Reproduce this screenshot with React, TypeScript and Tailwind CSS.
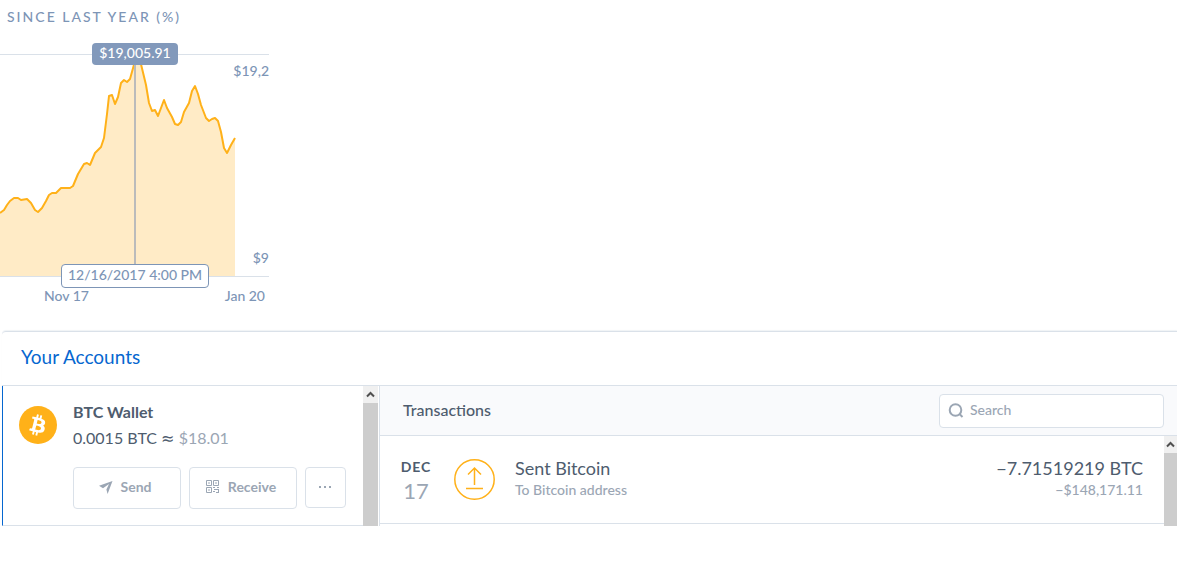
import type { ReactNode } from "react";
import clsx from "clsx";

// Price points in chart coordinates, origin at the top left of the plot
const PRICE_POINTS: [number, number][] = [
  [0, 158], [4, 155], [7, 150], [10, 146], [14, 143], [18, 143], [21, 145],
  [27, 144], [31, 148], [35, 155], [38, 157], [42, 153], [46, 146], [49, 140],
  [52, 138], [56, 138], [61, 133], [70, 133], [73, 131], [78, 119], [84, 109],
  [87, 108], [90, 110], [95, 98], [101, 92], [104, 83], [107, 59], [109, 41],
  [112, 40], [115, 49], [118, 42], [121, 28], [124, 25], [127, 27], [130, 24],
  [135, 6], [140, 5], [146, 30], [149, 48], [152, 56], [155, 55], [158, 61],
  [161, 53], [164, 45], [167, 53], [172, 62], [175, 69], [178, 70], [181, 67],
  [184, 57], [189, 48], [192, 36], [195, 31], [198, 39], [201, 50], [206, 63],
  [209, 66], [212, 64], [215, 63], [218, 66], [221, 77], [224, 93], [227, 98],
  [231, 90], [235, 83],
];

const LINE = PRICE_POINTS.map(([x, y]) => `${x},${y}`).join(" ");

function PriceChart() {
  return (
    <section className="w-[269px] text-sm font-medium text-[#7d95b6]">
      <h2 className="flex h-[53px] items-start pl-[7px] pt-2 text-sm leading-[18px] tracking-[2px]">
        SINCE LAST YEAR (%)
      </h2>
      <div className="relative mt-px h-[223px] border-y border-[#dae1e9]">
        <svg
          viewBox="0 0 269 221"
          className="block h-full w-full"
          role="img"
          aria-label="Bitcoin price"
        >
          <polygon points={`0,221 ${LINE} 235,221`} fill="#ffebc6" />
          <polyline
            points={LINE}
            fill="none"
            stroke="#ffb119"
            strokeWidth="2"
            strokeLinejoin="round"
          />
          <path d="M135 0V221" stroke="#bbbbbb" strokeWidth="2" />
        </svg>
        <span className="absolute right-0 top-[7px] leading-[18px]">$19,2</span>
        <span className="absolute bottom-[9px] right-0 leading-[18px]">$9</span>
        {/* Hover markers */}
        <span className="absolute -top-3 left-[135px] flex h-[22px] w-[86px] -translate-x-1/2 items-center justify-center rounded bg-[#8299bb] pb-0.5 text-white">
          $19,005.91
        </span>
        <span className="absolute bottom-0 left-[135px] flex h-6 w-[148px] -translate-x-1/2 translate-y-1/2 items-center justify-center whitespace-nowrap rounded border border-[#7d95b6] bg-white pb-0.5">
          12/16/2017 4:00 PM
        </span>
      </div>
      <div className="flex justify-between pl-11 pr-1 pt-2.5 leading-[18px]">
        <span>Nov 17</span>
        <span>Jan 20</span>
      </div>
    </section>
  );
}

function ScrollBar({ className }: { className?: string }) {
  return (
    <div className={clsx("shrink-0 bg-[#cdcdcd]", className)} aria-hidden="true">
      <div className="flex h-[17px] items-center justify-center bg-[#f0f0f0]">
        <svg width="9" height="7" viewBox="0 0 9 7">
          <path
            d="M1 5.5 4.5 2 8 5.5"
            fill="none"
            stroke="#505050"
            strokeWidth="2"
          />
        </svg>
      </div>
    </div>
  );
}

function BitcoinLogo() {
  return (
    <svg viewBox="0 0 32 32" className="size-[38px] shrink-0" aria-hidden="true">
      <circle cx="16" cy="16" r="16" fill="#ffb119" />
      <path
        fill="#fff"
        transform="translate(16 16) scale(0.9) translate(-16.5 -16)"
        d="M23.19 14.02c.31-2.1-1.28-3.23-3.47-3.98l.71-2.84-1.73-.43-.69 2.77-1.39-.33.7-2.79-1.73-.43-.71 2.84-1.1-.26-2.4-.6-.46 1.85s1.29.3 1.26.32c.7.17.83.63.81 1l-.81 3.23.18.06-.18-.05-1.13 4.54c-.09.21-.3.53-.79.41l-1.26-.32-.86 1.99 2.25.56 1.24.32-.71 2.87 1.73.43.7-2.84 1.38.36-.7 2.83 1.72.43.72-2.87c2.95.56 5.17.33 6.1-2.34.75-2.15-.04-3.39-1.59-4.2 1.13-.26 1.98-1 2.21-2.53zm-3.95 5.54c-.53 2.15-4.15.99-5.32.7l.95-3.81c1.17.29 4.93.87 4.37 3.11zm.53-5.57c-.48 1.96-3.49.96-4.47.72l.86-3.45c.98.24 4.12.7 3.61 2.73z"
      />
    </svg>
  );
}

function SendIcon() {
  return (
    <svg width="14" height="14" viewBox="0 0 14 14" aria-hidden="true">
      <path d="M13.5 1 0 5.8 4 8.2 10 4 7.4 9.4 8.6 14Z" fill="currentColor" />
    </svg>
  );
}

function QrIcon() {
  return (
    <svg
      width="14"
      height="14"
      viewBox="0 0 14 14"
      fill="none"
      stroke="currentColor"
      aria-hidden="true"
    >
      <path d="M.5 .5h5v5h-5zM7.5 .5h5v5h-5zM.5 7.5h5v5h-5z" />
      <path d="M2 3h2M9 3h2M2 10h2M7 7.5h2M11 7.5h2M8 9.5h5M7 11.5h2M12.5 9v4M10 12.5h3" />
    </svg>
  );
}

function SentIcon() {
  return (
    <svg
      viewBox="0 0 41 41"
      className="size-[41px] shrink-0"
      fill="none"
      stroke="#ffb119"
      strokeWidth="1.5"
      aria-hidden="true"
    >
      <circle cx="20.5" cy="20.5" r="19.7" />
      <path d="M20.5 26V9M14 15.5l6.5-6.5 6.5 6.5M12 29.5h17" />
    </svg>
  );
}

function ActionButton({
  children,
  className,
  label,
}: {
  children: ReactNode;
  className?: string;
  label?: string;
}) {
  return (
    <button
      type="button"
      aria-label={label}
      className={clsx(
        "flex items-center justify-center gap-2 rounded border border-[#dae1e9] bg-white pb-0.5 text-sm font-bold text-[#9ba6b4]",
        className
      )}
    >
      {children}
    </button>
  );
}

function WalletPanel() {
  return (
    <div className="flex w-[378px] shrink-0 border-r border-[#dae1e9]">
      <div className="flex flex-1 gap-4 border-b border-l border-b-[#dae1e9] border-l-[#0667d0] pl-4 pt-[15px]">
        <div className="pt-[5px]">
          <BitcoinLogo />
        </div>
        <div>
          <h3 className="text-base font-bold leading-[22px] text-[#4e5c6e]">
            BTC Wallet
          </h3>
          <p className="pt-1 text-base leading-[22px] text-[#4e5c6e]">
            0.0015 BTC <span className="font-['DejaVu_Sans',sans-serif]">≈</span>{" "}
            <span className="text-[#9ba6b4]">$18.01</span>
          </p>
          <div className="flex items-start gap-2 pt-[17px]">
            <ActionButton className="h-[42px] w-[108px] pr-1">
              <SendIcon />
              Send
            </ActionButton>
            <ActionButton className="h-[42px] w-[108px] pr-1">
              <QrIcon />
              Receive
            </ActionButton>
            <ActionButton className="h-[41px] w-[41px] pr-0.5" label="More">
              <svg width="12" height="2" viewBox="0 0 12 2" fill="currentColor">
                <path d="M0 0h2v2H0zM5 0h2v2H5zM10 0h2v2h-2z" />
              </svg>
            </ActionButton>
          </div>
        </div>
      </div>
      <ScrollBar className="mr-px w-[15px]" />
    </div>
  );
}

function TransactionsPanel() {
  return (
    <div className="flex min-w-0 flex-1 flex-col">
      <div className="flex h-[50px] items-center justify-between border-b border-[#dae1e9] bg-[#f9fafc] pl-[23px] pr-[13px]">
        <h3 className="pb-0.5 text-base font-medium text-[#4e5c6e]">
          Transactions
        </h3>
        <label className="flex h-[34px] w-[225px] items-center gap-1.5 rounded border border-[#dae1e9] bg-white px-2 text-[#9ba6b4]">
          <svg
            width="16"
            height="16"
            viewBox="0 0 16 16"
            fill="none"
            stroke="currentColor"
            strokeWidth="2"
            aria-hidden="true"
          >
            <circle cx="7.5" cy="7" r="5.8" />
            <path d="m11.5 11 3 3" />
          </svg>
          <input
            type="search"
            aria-label="Search transactions"
            placeholder="Search"
            className="min-w-0 flex-1 pb-0.5 text-sm font-medium outline-none placeholder:text-[#9ba6b4]"
          />
        </label>
      </div>
      <div className="flex flex-1">
        <div className="min-w-0 flex-1">
          <div className="flex h-[88px] items-center border-b border-[#dae1e9] pl-5 pr-[21px]">
            <div className="w-8 text-center text-[#4e5c6e]">
              <div className="text-sm font-bold leading-5 tracking-[1px]">DEC</div>
              <div className="pt-0.5 text-[22px] leading-6 text-[#9ba6b4]">
                17
              </div>
            </div>
            <div className="pl-[22px]">
              <SentIcon />
            </div>
            <div className="flex-1 pb-0.5 pl-5">
              <div className="text-lg leading-[22px] text-[#4e5c6e]">
                Sent Bitcoin
              </div>
              <div className="text-sm font-medium leading-[22px] text-[#9ba6b4]">
                To Bitcoin address
              </div>
            </div>
            <div className="pb-0.5 text-right">
              <div className="text-lg leading-[22px] text-[#4e5c6e]">
                −7.71519219 BTC
              </div>
              <div className="text-sm font-medium leading-[22px] text-[#9ba6b4]">
                −$148,171.11
              </div>
            </div>
          </div>
        </div>
        <ScrollBar className="w-[13px]" />
      </div>
    </div>
  );
}

export default function App() {
  return (
    <main className="min-h-screen overflow-hidden bg-white font-['Lato',sans-serif]">
      <PriceChart />
      <section className="ml-0.5 mt-[26px] rounded-tl border-t border-[#dae1e9] shadow-[0_-1px_1px_#f0f3f6]">
        <h2 className="flex h-[54px] items-center border-b border-[#dae1e9] pb-[3px] pl-[19px] text-[19px] text-[#0667d0]">
          Your Accounts
        </h2>
        <div className="flex h-[140px]">
          <WalletPanel />
          <TransactionsPanel />
        </div>
      </section>
    </main>
  );
}
